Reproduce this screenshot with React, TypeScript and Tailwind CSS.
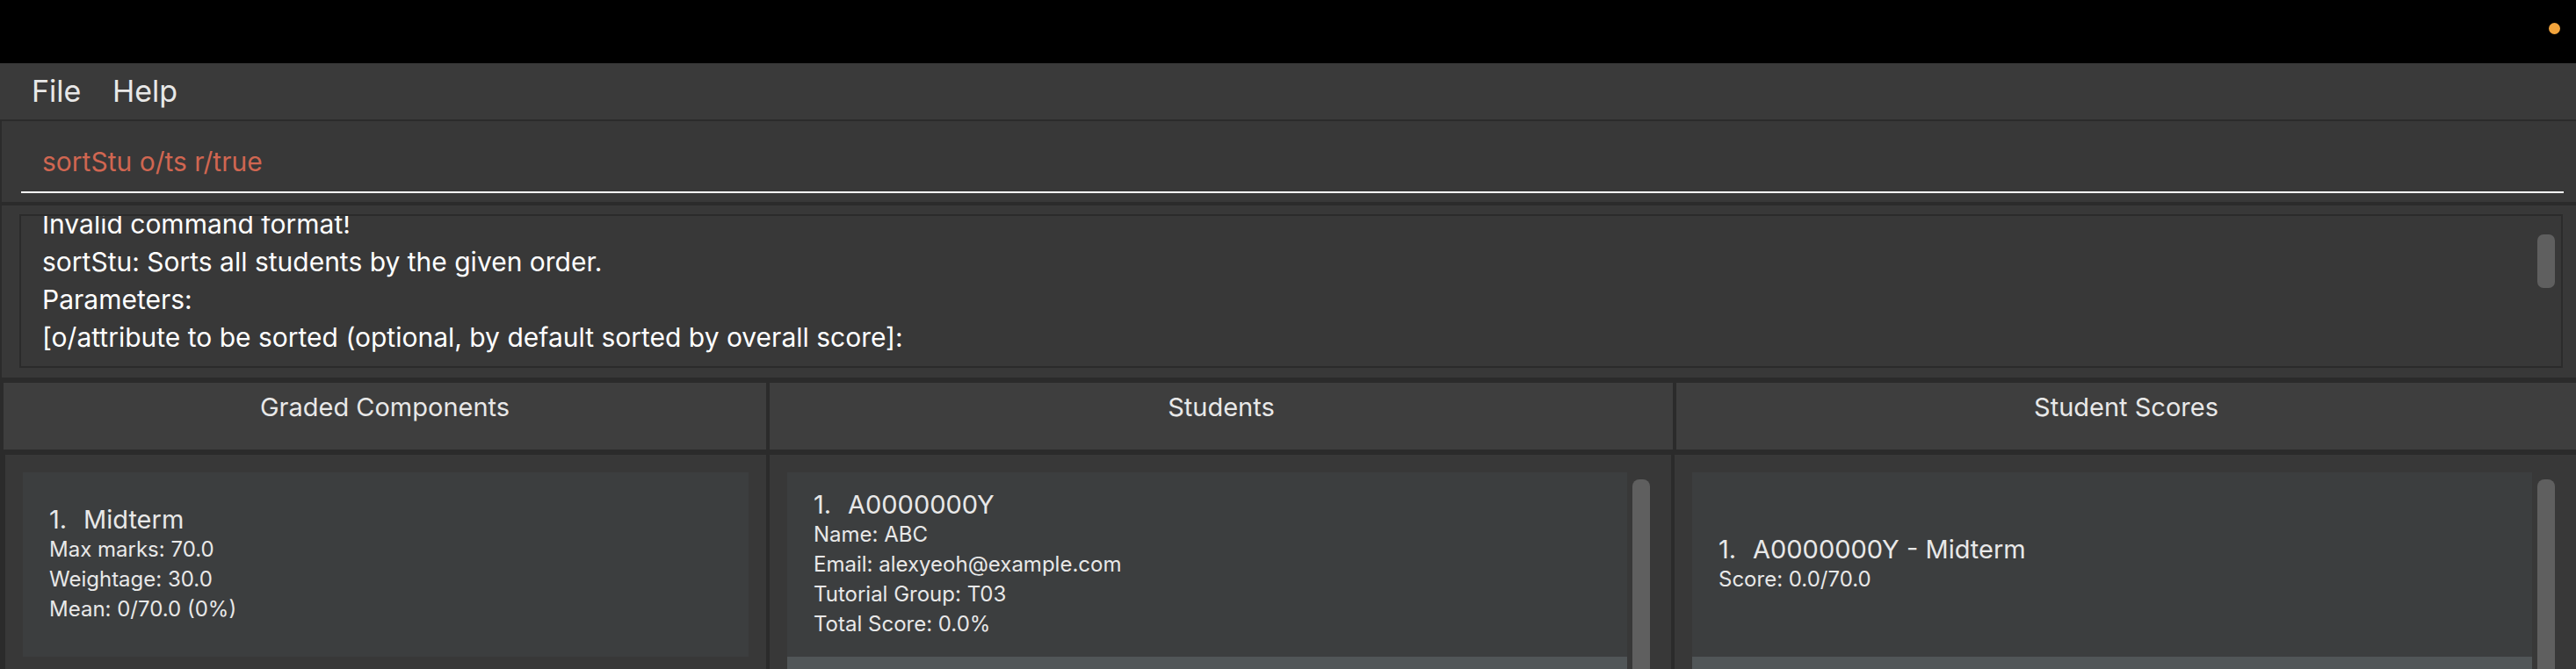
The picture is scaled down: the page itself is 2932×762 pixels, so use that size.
function Card({ title, lines }: { title: string; lines: string[] }) {
  return (
    <div className="h-[210px] shrink-0 bg-[#3c3e3f] flex flex-col justify-center pl-[30px] text-[#e8e8e8]">
      <div className="flex text-[29px] leading-[34px]">
        <span className="inline-block w-[39px]">1.</span>
        <span>{title}</span>
      </div>
      {lines.map((line) => (
        <div key={line} className="text-[24px] leading-[34px]">
          {line}
        </div>
      ))}
    </div>
  );
}

function ListPanel({ children }: { children: React.ReactNode }) {
  return (
    <div className="flex-1 flex bg-[#383838] pt-[20px] pl-[20px]">
      <div className="w-[956px] flex flex-col">
        {children}
        {/* next (odd) cell peeking out below */}
        <div className="h-[200px] shrink-0 bg-[#515658]" />
      </div>
      <div className="ml-[6px] mt-[8px] w-[20px] h-[300px] rounded-t-[8px] bg-[#5f5f5f]" />
    </div>
  );
}

const result = [
  "Invalid command format!",
  "sortStu: Sorts all students by the given order.",
  "Parameters:",
  "[o/attribute to be sorted (optional, by default sorted by overall score]:",
];

export default function App() {
  return (
    <div className="h-[762px] w-[2932px] overflow-hidden flex flex-col bg-[#2b2b2b] font-['Inter',sans-serif]">
      {/* window title bar */}
      <div className="h-[72px] shrink-0 bg-black flex items-center justify-end pr-[18px]">
        <div className="w-[13px] h-[13px] -mt-[8px] rounded-full bg-[#f2a43c]" />
      </div>

      {/* menu bar */}
      <div className="h-[64px] shrink-0 bg-[#3a3a3a] flex items-center pl-[36px] text-[34px] leading-none text-[#e8e8e8]">
        <span className="inline-block w-[92px]">File</span>
        <span>Help</span>
      </div>

      {/* command box */}
      <div className="mt-[2px] ml-[2px] h-[92px] shrink-0 bg-[#383838] flex flex-col pt-[31px]">
        <div className="pl-[46px] text-[30px] leading-none text-[#d06651]">sortStu o/ts r/true</div>
        <div className="mt-[19px] ml-[22px] w-[2894px] h-[2px] bg-white" />
      </div>

      {/* result display */}
      <div className="mt-[4px] ml-[2px] h-[196px] shrink-0 bg-[#383838] pt-[10px] pl-[20px] pr-[15px]">
        <div className="h-[175px] border-2 border-[#2b2b2b] overflow-hidden flex">
          <div className="flex-1 pl-[24px] -mt-[12px] text-[30px] leading-[43px] text-white">
            {result.map((line) => (
              <div key={line} className="whitespace-nowrap">
                {line}
              </div>
            ))}
          </div>
          <div className="mt-[21px] mr-[7px] w-[20px] h-[61px] shrink-0 rounded-[7px] bg-[#5f5f5f]" />
        </div>
      </div>

      {/* panel headers */}
      <div className="mt-[6px] h-[76px] shrink-0 flex pl-[4px] gap-[4px] text-[29px] leading-none text-[#e8e8e8] text-center">
        <div className="w-[868px] bg-[#3e3e3e] pt-[13px]">Graded Components</div>
        <div className="w-[1028px] bg-[#3e3e3e] pt-[13px]">Students</div>
        <div className="flex-1 bg-[#3e3e3e] pt-[13px]">Student Scores</div>
      </div>

      {/* panel bodies */}
      <div className="mt-[6px] flex-1 flex pl-[6px] gap-[4px] overflow-hidden">
        <div className="w-[866px] bg-[#383838] pt-[20px] pl-[20px]">
          <div className="w-[826px]">
            <Card title="Midterm" lines={["Max marks: 70.0", "Weightage: 30.0", "Mean: 0/70.0 (0%)"]} />
          </div>
        </div>
        <div className="w-[1026px] flex">
          <ListPanel>
            <Card
              title="A0000000Y"
              lines={["Name: ABC", "Email: alexyeoh@example.com", "Tutorial Group: T03", "Total Score: 0.0%"]}
            />
          </ListPanel>
        </div>
        <div className="flex-1 flex">
          <ListPanel>
            <Card title="A0000000Y - Midterm" lines={["Score: 0.0/70.0"]} />
          </ListPanel>
        </div>
      </div>
    </div>
  );
}
